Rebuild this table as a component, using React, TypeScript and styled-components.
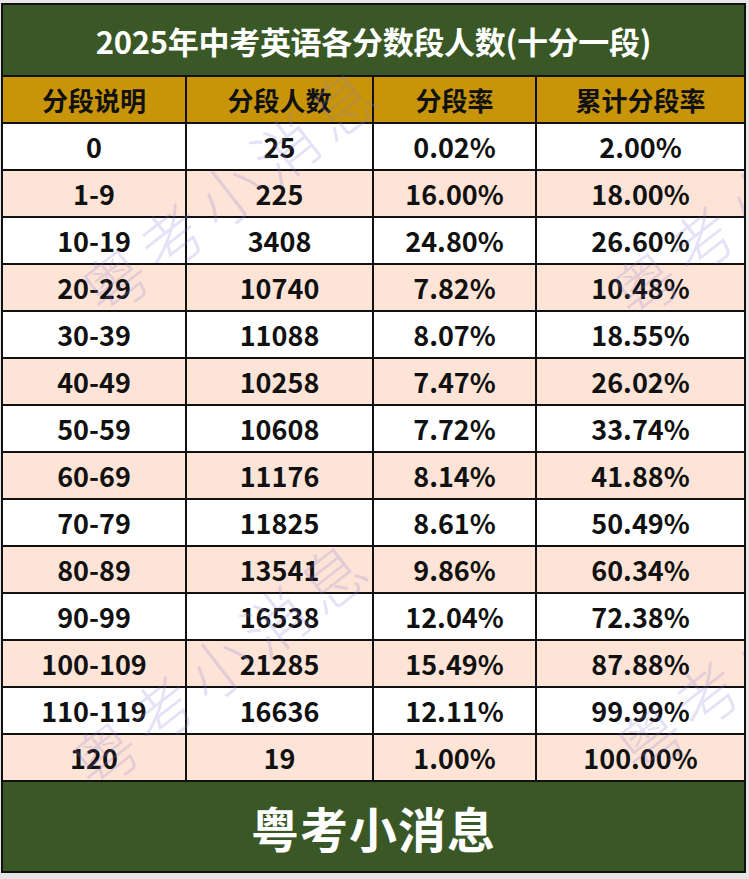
import React from "react";
import styled, { createGlobalStyle } from "styled-components";

const Global = createGlobalStyle`
  html, body { margin: 0; padding: 0; background: #e6e6e6; }
  body { font-family: "Noto Sans CJK SC", "Noto Sans", sans-serif; }
`;

const Page = styled.div`
  position: relative;
  width: 745px;
  margin: 3px 0 0 1px;
  overflow: hidden;
  border: 2px solid #111;
  box-sizing: border-box;
  background: #fff;
`;

const TitleBar = styled.div`
  height: 72px;
  background: #3a5726;
  color: #fff;
  display: flex;
  align-items: center;
  justify-content: center;
  font-size: 31px;
  font-weight: 700;
  border-bottom: 2px solid #111;
  box-sizing: border-box;
  letter-spacing: -0.3px;
`;

const Row = styled.div<{ $bg: string }>`
  display: grid;
  grid-template-columns: 184px 187px 163px 1fr;
  height: 47px;
  background: ${(p) => p.$bg};
  border-bottom: 2px solid #111;
  box-sizing: border-box;
`;

const Cell = styled.div<{ $size: number }>`
  display: flex;
  align-items: center;
  justify-content: center;
  font-size: ${(p) => p.$size}px;
  font-weight: 700;
  color: #111;
  border-right: 2px solid #111;
  &:last-child { border-right: none; }
`;

const Footer = styled.div`
  height: 89px;
  background: #3a5726;
  color: #fff;
  display: flex;
  align-items: center;
  justify-content: center;
  font-size: 48px;
  font-weight: 700;
  letter-spacing: 1px;
`;

const Watermark = styled.div<{ $x: number; $y: number }>`
  position: absolute;
  left: ${(p) => p.$x}px;
  top: ${(p) => p.$y}px;
  transform: rotate(-38deg);
  transform-origin: left center;
  font-size: 64px;
  line-height: 1;
  font-weight: 300;
  color: rgba(135, 120, 215, 0.22);
  white-space: nowrap;
  pointer-events: none;
  letter-spacing: 8px;
`;

const headers = ["分段说明", "分段人数", "分段率", "累计分段率"];
const data: [string, string, string, string][] = [
  ["0", "25", "0.02%", "2.00%"],
  ["1-9", "225", "16.00%", "18.00%"],
  ["10-19", "3408", "24.80%", "26.60%"],
  ["20-29", "10740", "7.82%", "10.48%"],
  ["30-39", "11088", "8.07%", "18.55%"],
  ["40-49", "10258", "7.47%", "26.02%"],
  ["50-59", "10608", "7.72%", "33.74%"],
  ["60-69", "11176", "8.14%", "41.88%"],
  ["70-79", "11825", "8.61%", "50.49%"],
  ["80-89", "13541", "9.86%", "60.34%"],
  ["90-99", "16538", "12.04%", "72.38%"],
  ["100-109", "21285", "15.49%", "87.88%"],
  ["110-119", "16636", "12.11%", "99.99%"],
  ["120", "19", "1.00%", "100.00%"],
];

export default function App() {
  return (
    <>
      <Global />
      <Page>
        <TitleBar>2025年中考英语各分数段人数(十分一段)</TitleBar>
        <Row $bg="#c8950a">
          {headers.map((h) => (
            <Cell key={h} $size={26}>{h}</Cell>
          ))}
        </Row>
        {data.map((r, i) => (
          <Row key={i} $bg={i % 2 === 0 ? "#ffffff" : "#fde4d7"}>
            {r.map((c, j) => (
              <Cell key={j} $size={27}>{c}</Cell>
            ))}
          </Row>
        ))}
        <Footer>粤考小消息</Footer>
        <Watermark $x={85} $y={262}>粤考小消息</Watermark>
        <Watermark $x={75} $y={735}>粤考小消息</Watermark>
        <Watermark $x={615} $y={265}>粤考小消息</Watermark>
        <Watermark $x={620} $y={720}>粤考小消息</Watermark>
      </Page>
    </>
  );
}
